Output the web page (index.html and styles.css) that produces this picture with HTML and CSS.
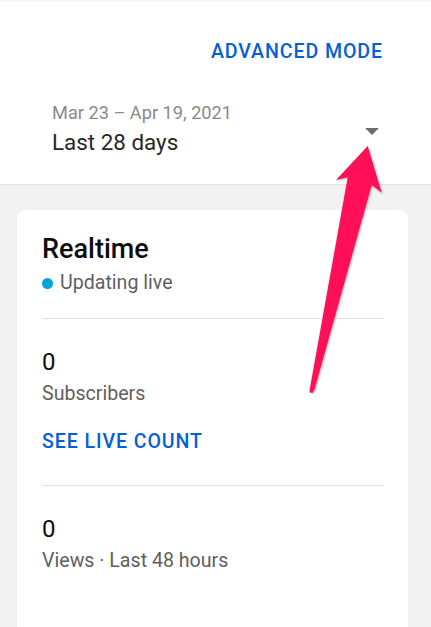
FILE: index.html
```html
<!DOCTYPE html>
<html lang="en">
<head>
    <meta charset="UTF-8">
    <meta name="viewport" content="width=device-width, initial-scale=1.0">
    <title>Channel analytics</title>
    <link rel="stylesheet" href="styles.css">
</head>
<body>
    <div class="top">
        <div class="mode-row">
            <a class="text-btn" href="#">ADVANCED MODE</a>
        </div>
        <div class="period">
            <div class="period-text">
                <div class="period-range">Mar 23 &ndash; Apr 19, 2021</div>
                <div class="period-label">Last 28 days</div>
            </div>
            <span class="caret"></span>
        </div>
    </div>

    <div class="content">
        <div class="card">
            <h2 class="card-title">Realtime</h2>
            <div class="live"><span class="live-dot"></span>Updating live</div>
            <hr class="divider">
            <div class="metric">0</div>
            <div class="metric-label">Subscribers</div>
            <a class="text-btn live-count" href="#">SEE LIVE COUNT</a>
            <hr class="divider gap">
            <div class="metric">0</div>
            <div class="metric-label">Views &middot; Last 48 hours</div>
        </div>
    </div>

    <!-- annotation arrow pointing at the period dropdown -->
    <svg class="pointer" width="431" height="627" viewBox="0 0 431 627">
        <polygon points="367.7,146 381.7,192.7 371.7,185 314.5,389.5 312.5,392.8 309.5,392.5 309.8,389 347.7,177.3 336,180" fill="#ff0f57"/>
    </svg>
</body>
</html>
```

FILE: styles.css
```css
body {
    margin: 0;
    font-family: Roboto, "Noto Sans", sans-serif;
    background: #f2f2f2;
    color: #0d0d0d;
    overflow: hidden;
}
.top {
    background: #fff;
    padding: 40px 52px 28px 52px;
    border-bottom: 1px solid #e3e3e3;
    box-shadow: inset 0 3px 3px -2px rgba(0, 0, 0, 0.07);
}
.mode-row {
    text-align: right;
    margin-right: -4px;
}
.text-btn {
    display: inline-block;
    font-size: 19.6px;
    line-height: 24px;
    font-weight: 500;
    letter-spacing: 0.9px;
    color: #065fd4;
    text-decoration: none;
}
.period {
    display: flex;
    align-items: center;
    margin-top: 38px;
}
.period-text { flex: 1; }
.period-range {
    font-size: 18.2px;
    line-height: 22px;
    color: #8a8a8a;
}
.period-label {
    margin-top: 4px;
    font-size: 22.4px;
    line-height: 28px;
    color: #282828;
}
.caret {
    width: 0;
    height: 0;
    margin-top: 4px;
    border-left: 7px solid transparent;
    border-right: 7px solid transparent;
    border-top: 7px solid #6e6e6e;
}
.content {
    padding: 25px 23px 0 17px;
}
.card {
    background: #fff;
    border-radius: 9px 9px 0 0;
    padding: 23px 24px 80px 25px;
}
.card-title {
    margin: 0;
    font-size: 27px;
    line-height: 32px;
    font-weight: 500;
    color: #0d0d0d;
}
.live {
    display: flex;
    align-items: center;
    margin-top: 6px;
    font-size: 19.6px;
    line-height: 24px;
    color: #606060;
}
.live-dot {
    width: 11px;
    height: 11px;
    border-radius: 50%;
    background: #03a5d8;
    margin-right: 7px;
}
.divider {
    margin: 23px 0 0;
    border: 0;
    border-top: 1px solid #e0e0e0;
}
.divider.gap { margin-top: 31px; }
.metric {
    margin-top: 29px;
    font-size: 24px;
    line-height: 28px;
    color: #0d0d0d;
}
.metric-label {
    margin-top: 6px;
    font-size: 19.6px;
    line-height: 24px;
    color: #606060;
}
.live-count { margin-top: 24px; }
.pointer {
    position: absolute;
    left: 0;
    top: 0;
    pointer-events: none;
    filter: drop-shadow(1px 1px 1px rgba(0, 0, 0, 0.3));
}
```
